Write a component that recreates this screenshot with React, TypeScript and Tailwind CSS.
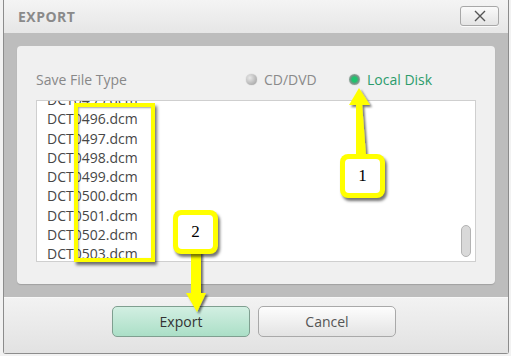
const files = [
  "DCT0495.dcm",
  "DCT0496.dcm",
  "DCT0497.dcm",
  "DCT0498.dcm",
  "DCT0499.dcm",
  "DCT0500.dcm",
  "DCT0501.dcm",
  "DCT0502.dcm",
  "DCT0503.dcm",
  "DCT0504.dcm",
];

function CalloutBox({ label, className }: { label: string; className: string }) {
  return (
    <div
      className={`absolute w-[45px] h-[44px] rounded-[8px] bg-[#ffff00] p-[5px] shadow-[2px_3px_3px_rgba(0,0,0,0.55)] ${className}`}
    >
      <div className="w-full h-full rounded-[4px] bg-white flex items-center justify-center text-[17px] text-black font-['Liberation_Serif',serif]">
        {label}
      </div>
    </div>
  );
}

export default function App() {
  return (
    <div className="relative w-[511px] h-[356px] bg-[#f2f2f2] overflow-hidden font-['Open_Sans',sans-serif]">
      {/* Dialog window */}
      <div className="ml-[3px] w-[506px] h-[354px] border border-t-0 border-[#8c8c8c] rounded-b-[3px] flex flex-col">
        {/* Title bar */}
        <div className="h-[33px] flex items-center justify-between pl-[14px] pr-[9px] bg-gradient-to-b from-[#f4f4f4] to-[#e6e6e6]">
          <span className="text-[14px] font-bold tracking-[0.5px] text-[#8a8a8a]">EXPORT</span>
          <button className="w-[39px] h-[20px] -mt-[1px] rounded-[3px] border border-[#a8a8a8] bg-gradient-to-b from-[#fafafa] to-[#e4e4e4] flex items-center justify-center shadow-[0_1px_0_rgba(255,255,255,0.8)]">
            <svg width="12" height="12" viewBox="0 0 12 12">
              <path d="M1 1L11 11M11 1L1 11" stroke="#555" strokeWidth="1.4" />
            </svg>
          </button>
        </div>

        {/* Content band */}
        <div className="h-[264px] bg-[#bdbdbd] px-[13px] pt-[13px] pb-[13px]">
          <div className="h-full rounded-[4px] bg-[#f0f0f0] px-[19px] pb-[22px] flex flex-col shadow-[0_1px_1px_rgba(0,0,0,0.15)]">
            <div className="h-[54px] flex items-center pt-[12px] text-[14px]">
              <span className="text-[#888] w-[210px]">Save File Type</span>
              <div className="flex items-center gap-[7px] w-[103px]">
                <span className="w-[11px] h-[11px] rounded-full bg-[radial-gradient(circle_at_35%_35%,#e8e8e8,#9a9a9a)] shadow-[0_0_1px_rgba(0,0,0,0.3)]" />
                <span className="text-[#8a8a8a]">CD/DVD</span>
              </div>
              <div className="flex items-center gap-[7px]">
                <span className="w-[11px] h-[11px] rounded-full bg-[radial-gradient(circle,#1ec46e_0,#1ec46e_32%,#6f9582_52%,#c3c8c6_100%)] shadow-[0_0_1px_rgba(0,0,0,0.3)]" />
                <span className="text-[#2c9c6c]">Local Disk</span>
              </div>
            </div>

            <div className="relative flex-1 bg-white border border-[#cfcfcf] overflow-hidden">
              <div className="-mt-[11px] pl-[10px] text-[14px] text-[#474747]">
                {files.map((f) => (
                  <div key={f} className="h-[19.3px] leading-[19.3px]">
                    {f}
                  </div>
                ))}
              </div>
              <div className="absolute right-[4px] top-[124px] w-[10px] h-[32px] rounded-full bg-[#d9d9d9] border border-[#b3b3b3]" />
            </div>
          </div>
        </div>

        {/* Footer */}
        <div className="flex-1 bg-gradient-to-b from-[#f2f2f2] to-[#e2e2e2] border-t border-[#f8f8f8] flex justify-center gap-[8px] pt-[8px] pr-[4px]">
          <button className="w-[138px] h-[31px] rounded-[5px] border border-[#7f9f90] bg-gradient-to-b from-[#d2efe2] to-[#abdfc7] text-[14px] text-[#333]">
            Export
          </button>
          <button className="w-[138px] h-[31px] rounded-[5px] border border-[#a9a9a9] bg-gradient-to-b from-[#fdfdfd] to-[#e3e3e3] text-[14px] text-[#555]">
            Cancel
          </button>
        </div>
      </div>

      {/* Annotations */}
      <div className="absolute left-[74px] top-[103px] w-[81px] h-[159px] border-[4px] border-[#ffff00] shadow-[2px_3px_3px_rgba(0,0,0,0.55),inset_1px_1px_2px_rgba(0,0,0,0.35)]" />

      <svg className="absolute left-0 top-0" width="511" height="356" viewBox="0 0 511 356">
        <defs>
          <filter id="sh" x="-50%" y="-50%" width="200%" height="200%">
            <feDropShadow dx="2" dy="2" stdDeviation="1.2" floodColor="#000" floodOpacity="0.55" />
          </filter>
        </defs>
        <g filter="url(#sh)" fill="#ffff00">
          <polygon points="356,103 362,103 366,156 356,156" />
          <polygon points="349,105 359,88 370,105" />
          <polygon points="191,250 201,250 201,295 191,295" />
          <polygon points="186,293 206,293 197,312" />
        </g>
      </svg>

      <CalloutBox label="1" className="left-[340px] top-[154px]" />
      <CalloutBox label="2" className="left-[173px] top-[210px]" />
    </div>
  );
}
